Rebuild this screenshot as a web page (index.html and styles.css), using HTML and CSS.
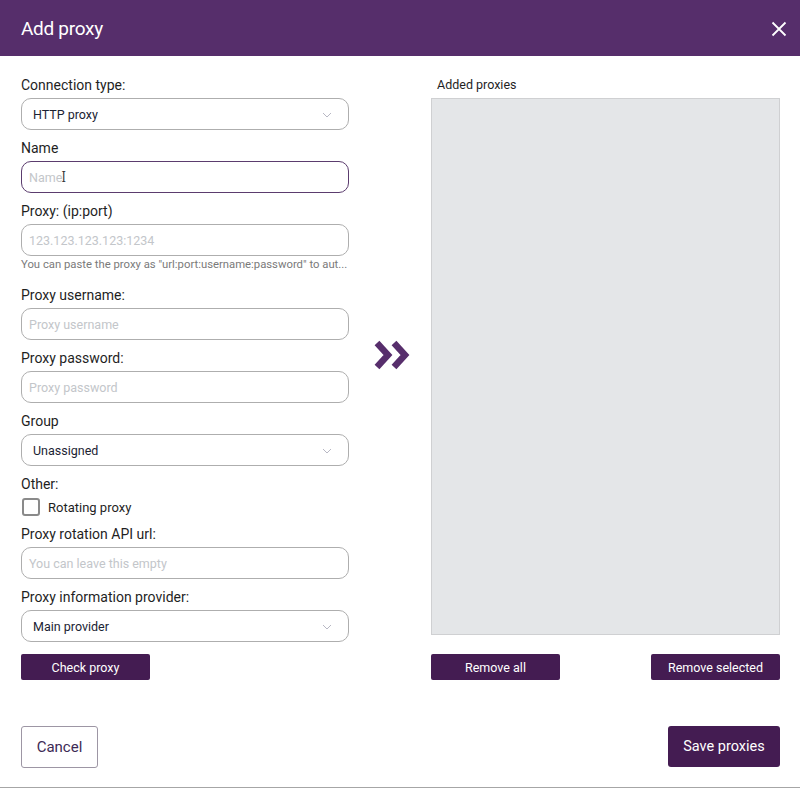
FILE: index.html
```html
<!DOCTYPE html>
<html>
<head>
<meta charset="utf-8">
<link rel="stylesheet" href="styles.css">
</head>
<body>
<div class="dialog">
  <header class="head">
    <h1 class="title">Add proxy</h1>
    <svg class="close" width="16" height="16" viewBox="0 0 16 16"><path d="M1.5 1.5L14.5 14.5M14.5 1.5L1.5 14.5" stroke="#fff" stroke-width="1.8" fill="none"/></svg>
  </header>
  <main class="body">
    <section class="form">
      <label class="lbl">Connection type:</label>
      <div class="field select"><span class="val">HTTP proxy</span><svg class="chev" width="10" height="6" viewBox="0 0 10 6"><path d="M1 1L5 5L9 1" stroke="#b8b8c4" stroke-width="1" fill="none"/></svg></div>
      <label class="lbl">Name</label>
      <div class="field focus"><span class="ph">Name</span><span class="cursor">I</span></div>
      <label class="lbl">Proxy: (ip:port)</label>
      <div class="field tight"><span class="ph">123.123.123.123:1234</span></div>
      <p class="hint">You can paste the proxy as "url:port:username:password" to aut...</p>
      <label class="lbl">Proxy username:</label>
      <div class="field"><span class="ph">Proxy username</span></div>
      <label class="lbl">Proxy password:</label>
      <div class="field"><span class="ph">Proxy password</span></div>
      <label class="lbl">Group</label>
      <div class="field select"><span class="val">Unassigned</span><svg class="chev" width="10" height="6" viewBox="0 0 10 6"><path d="M1 1L5 5L9 1" stroke="#b8b8c4" stroke-width="1" fill="none"/></svg></div>
      <label class="lbl">Other:</label>
      <div class="check"><span class="box"></span><span class="ctext">Rotating proxy</span></div>
      <label class="lbl">Proxy rotation API url:</label>
      <div class="field"><span class="ph">You can leave this empty</span></div>
      <label class="lbl">Proxy information provider:</label>
      <div class="field select last"><span class="val">Main provider</span><svg class="chev" width="10" height="6" viewBox="0 0 10 6"><path d="M1 1L5 5L9 1" stroke="#b8b8c4" stroke-width="1" fill="none"/></svg></div>
      <button class="btn small">Check proxy</button>
    </section>
    <div class="mid">
      <svg width="38" height="30" viewBox="0 0 38 30"><path d="M3 3L14 15L3 27M20 3L31 15L20 27" stroke="#572e6c" stroke-width="6.5" fill="none" stroke-linejoin="miter"/></svg>
    </div>
    <section class="list">
      <div class="lbl2">Added proxies</div>
      <div class="box-list"></div>
      <div class="list-actions">
        <button class="btn small">Remove all</button>
        <button class="btn small">Remove selected</button>
      </div>
    </section>
  </main>
  <footer class="foot">
    <button class="btn-outline">Cancel</button>
    <button class="btn big">Save proxies</button>
  </footer>
</div>
</body>
</html>
```

FILE: styles.css
```css
* { box-sizing: border-box; }
html, body { margin: 0; padding: 0; }
body {
  font-family: Roboto, "Liberation Sans", sans-serif;
  background: #fff;
  width: 800px;
  height: 789px;
  overflow: hidden;
}
.dialog {
  height: 788px;
  border-bottom: 1px solid #a6a6a6;
  display: flex;
  flex-direction: column;
}
.head {
  height: 56px;
  background: #562e6b;
  display: flex;
  align-items: center;
  justify-content: space-between;
  padding: 0 13px 0 21px;
}
.title {
  margin: 0;
  font-size: 19px;
  font-weight: 400;
  color: #fff;
  letter-spacing: -0.3px;
  padding-top: 1px;
}
.close { margin-top: 1px; }
.body {
  display: flex;
  padding: 20px 20px 0 21px;
  height: 626px;
}
.form {
  width: 328px;
  display: flex;
  flex-direction: column;
}
.lbl {
  display: block;
  font-size: 14px;
  line-height: 18px;
  color: #1f1f1f;
  margin-bottom: 4px;
}
.field {
  height: 32px;
  border: 1.5px solid #aeaeae;
  border-radius: 10px;
  display: flex;
  align-items: center;
  padding: 0 12px 0 7px;
  margin-bottom: 9px;
  font-size: 12.5px;
  position: relative;
}
.field.tight { margin-bottom: 2px; }
.field.focus { border-color: #5b3c6e; }
.field.select { padding-left: 11px; justify-content: space-between; }
.field.last { margin-bottom: 12px; }
.val { color: #1b2333; }
.ph { color: #c3c6ca; }
.cursor {
  font-family: "DejaVu Serif", serif;
  font-size: 14px;
  color: #333;
  margin-left: -1px;
  transform: scaleX(0.8);
}
.chev { margin-right: 4px; margin-top: 1px; }
.hint {
  margin: 0 0 14px 0;
  font-size: 11.3px;
  line-height: 14px;
  color: #7a7a7a;
  white-space: nowrap;
}
.check {
  display: flex;
  align-items: center;
  height: 18px;
  margin: 1px 0 9px 1px;
}
.box {
  width: 18px;
  height: 18px;
  border: 2px solid #8a8a8a;
  border-radius: 3px;
  margin-right: 8px;
}
.ctext { font-size: 13px; color: #1f1f1f; }
.btn {
  background: #441c52;
  color: #fff;
  border: none;
  font-family: Roboto, "Liberation Sans", sans-serif;
  cursor: pointer;
}
.btn.small {
  width: 129px;
  height: 26px;
  border-radius: 2px;
  font-size: 12.5px;
  padding: 0;
}
.mid {
  width: 82px;
  display: flex;
  align-items: flex-start;
  justify-content: center;
  padding-top: 264px;
  padding-left: 6px;
}
.list {
  width: 349px;
  display: flex;
  flex-direction: column;
}
.lbl2 {
  font-size: 12.5px;
  line-height: 18px;
  color: #1f1f1f;
  padding-left: 6px;
  margin-bottom: 4px;
}
.box-list {
  height: 537px;
  background: #e4e6e8;
  border: 1px solid #cfd0d2;
  margin-bottom: 19px;
}
.list-actions {
  display: flex;
  justify-content: space-between;
}
.foot {
  flex: 1;
  display: flex;
  justify-content: space-between;
  align-items: flex-start;
  padding: 44px 20px 0 21px;
}
.btn-outline {
  width: 77px;
  height: 42px;
  background: #fff;
  border: 1.5px solid #9d96a4;
  border-radius: 3px;
  color: #3d2a55;
  font-size: 15px;
  font-family: Roboto, "Liberation Sans", sans-serif;
}
.btn.big {
  width: 112px;
  height: 41px;
  border-radius: 3px;
  font-size: 14.5px;
}
```
